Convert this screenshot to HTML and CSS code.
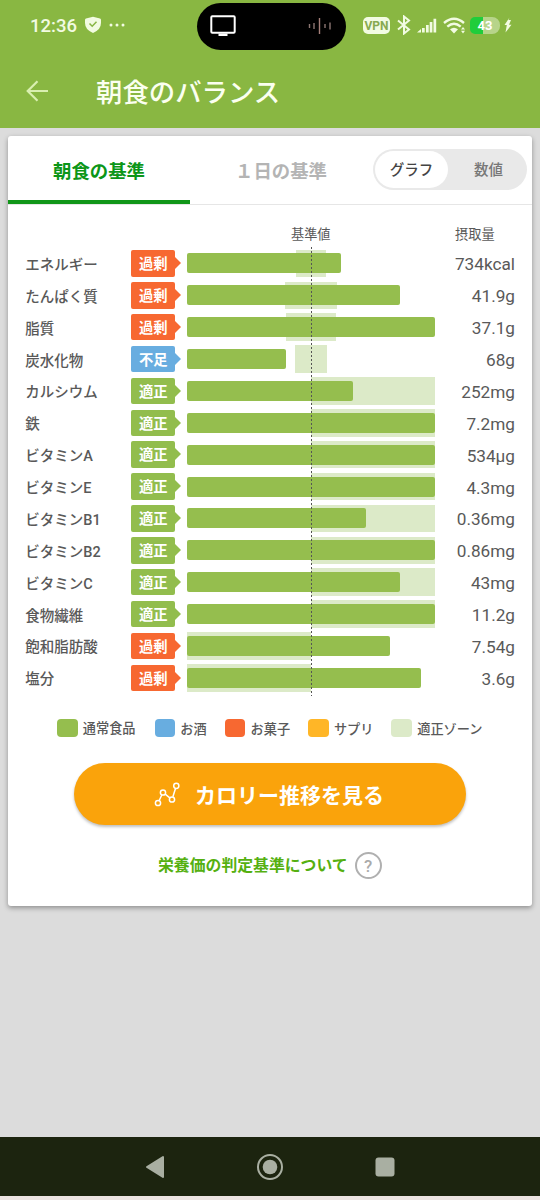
FILE: index.html
```html
<!DOCTYPE html>
<html lang="ja">
<head>
<meta charset="utf-8">
<title>朝食のバランス</title>
<link rel="stylesheet" href="styles.css">
</head>
<body>
<div class="screen">
<header class="top">
  <div class="status">
    <span class="time">12:36</span>
    <svg class="shield" width="18" height="18" viewBox="0 0 18 18"><path d="M9 .8 16 2.600Q17 3 17 4V7Q17 13.500 9 17Q1 13.500 1 7V4Q1 3 2 2.600Z" fill="#f2fbe2"/><path d="M5.500 7.500 8.200 10.200 12.500 5.800" fill="none" stroke="#87b542" stroke-width="1.500"/></svg>
    <svg class="dots" width="16" height="4" viewBox="0 0 16 4" fill="#f2fbe2"><circle cx="2" cy="2" r="1.500"/><circle cx="8" cy="2" r="1.500"/><circle cx="14" cy="2" r="1.500"/></svg>
    <div class="island">
      <svg width="26" height="22" viewBox="0 0 26 22"><rect x="1.300" y="1.300" width="23.400" height="16.400" rx="1" fill="none" stroke="#fff" stroke-width="2"/><path d="M8.500 18.500h9v2.500h-9z" fill="#fff"/></svg>
      <svg width="24" height="18" viewBox="0 0 24 18" fill="none" stroke-width="1.400"><path d="M1.500 7v4M6 6v6M17 7v4M22 5.500v7" stroke="#8c7672"/><path d="M11.500 1v16" stroke="#a57f79"/></svg>
    </div>
    <div class="signals">
      <span class="vpn">VPN</span>
      <svg class="bt" width="14" height="20" viewBox="0 0 14 20" fill="none" stroke="#f2fbe2" stroke-width="2"><path d="M1 5.500 12 14.500 7 18.500V1.500L12 5.500 1 14.500"/></svg>
      <svg class="cell" width="20" height="15" viewBox="0 0 20 15" fill="#f2fbe2"><path d="M0 14.500 4 11v3.500zM5 10h2.700v4.500H5zM9 7h2.700v7.500H9zM12.700 4h2.700v10.500h-2.700zM16.500.8h2.700v13.700h-2.700z"/></svg>
      <svg class="wifi" width="23" height="17" viewBox="0 0 23 17"><g fill="none" stroke="#f2fbe2" stroke-width="2.400"><path d="M1 6Q11 -2.500 21 6"/><path d="M4.300 9.700Q11 4 17.700 9.700"/></g><path d="M7 12.300Q11 9.300 15 12.300L11 16.500z" fill="#f2fbe2"/><path d="M18 12.600 20 10l2 2.600zM18 13.800h4L20 16.500z" fill="#f2fbe2"/></svg>
      <span class="battery">43</span>
      <svg class="bolt" width="8" height="16" viewBox="0 0 8 16"><path d="M5.500.5.5 8h2.300L1.500 15.500 7.500 7.700H5L7 3H4.500z" fill="#f2fbe2"/></svg>
    </div>
  </div>
  <div class="titlebar">
    <svg width="22" height="22" viewBox="0 0 22 22" fill="none" stroke="#d9efb0" stroke-width="2.200"><path d="M22 11H2M11.500 1.200 1.700 11l9.800 9.800"/></svg>
    <h1>朝食のバランス</h1>
  </div>
</header>

<main class="card">
  <nav class="tabs">
    <a class="tab active">朝食の基準</a>
    <a class="tab">１日の基準</a>
    <div class="toggle"><span class="on">グラフ</span><span class="off">数値</span></div>
  </nav>

  <section class="chart">
    <div class="head"><span class="std">基準値</span><span class="amount">摂取量</span></div>
    <div class="rows">
      <div class="row"><span class="name">エネルギー</span><span class="badge over">過剰</span><div class="track"><i class="zone" style="margin-left:44%;width:12%"></i><i class="bar" style="width:62%"></i></div><span class="value">734kcal</span></div>
      <div class="row"><span class="name">たんぱく質</span><span class="badge over">過剰</span><div class="track"><i class="zone" style="margin-left:39.500%;width:21%"></i><i class="bar" style="width:86%"></i></div><span class="value">41.9g</span></div>
      <div class="row"><span class="name">脂質</span><span class="badge over">過剰</span><div class="track"><i class="zone" style="margin-left:40%;width:20%"></i><i class="bar" style="width:100%"></i></div><span class="value">37.1g</span></div>
      <div class="row"><span class="name">炭水化物</span><span class="badge under">不足</span><div class="track"><i class="zone" style="margin-left:43.500%;width:13%"></i><i class="bar" style="width:40%"></i></div><span class="value">68g</span></div>
      <div class="row"><span class="name">カルシウム</span><span class="badge">適正</span><div class="track"><i class="zone" style="margin-left:50%;width:50%"></i><i class="bar" style="width:67%"></i></div><span class="value">252mg</span></div>
      <div class="row"><span class="name">鉄</span><span class="badge">適正</span><div class="track"><i class="zone" style="margin-left:50%;width:50%"></i><i class="bar" style="width:100%"></i></div><span class="value">7.2mg</span></div>
      <div class="row"><span class="name">ビタミンA</span><span class="badge">適正</span><div class="track"><i class="zone" style="margin-left:50%;width:50%"></i><i class="bar" style="width:100%"></i></div><span class="value">534μg</span></div>
      <div class="row"><span class="name">ビタミンE</span><span class="badge">適正</span><div class="track"><i class="zone" style="margin-left:50%;width:50%"></i><i class="bar" style="width:100%"></i></div><span class="value">4.3mg</span></div>
      <div class="row"><span class="name">ビタミンB1</span><span class="badge">適正</span><div class="track"><i class="zone" style="margin-left:50%;width:50%"></i><i class="bar" style="width:72%"></i></div><span class="value">0.36mg</span></div>
      <div class="row"><span class="name">ビタミンB2</span><span class="badge">適正</span><div class="track"><i class="zone" style="margin-left:50%;width:50%"></i><i class="bar" style="width:100%"></i></div><span class="value">0.86mg</span></div>
      <div class="row"><span class="name">ビタミンC</span><span class="badge">適正</span><div class="track"><i class="zone" style="margin-left:50%;width:50%"></i><i class="bar" style="width:86%"></i></div><span class="value">43mg</span></div>
      <div class="row"><span class="name">食物繊維</span><span class="badge">適正</span><div class="track"><i class="zone" style="margin-left:50%;width:50%"></i><i class="bar" style="width:100%"></i></div><span class="value">11.2g</span></div>
      <div class="row"><span class="name">飽和脂肪酸</span><span class="badge over">過剰</span><div class="track"><i class="zone" style="width:50%"></i><i class="bar" style="width:82%"></i></div><span class="value">7.54g</span></div>
      <div class="row"><span class="name">塩分</span><span class="badge over">過剰</span><div class="track"><i class="zone" style="width:50%"></i><i class="bar" style="width:94.500%"></i></div><span class="value">3.6g</span></div>
    </div>
  </section>

  <div class="legend">
    <span class="key food">通常食品</span>
    <span class="key alcohol">お酒</span>
    <span class="key sweets">お菓子</span>
    <span class="key supple">サプリ</span>
    <span class="key proper">適正ゾーン</span>
  </div>

  <a class="button">
    <svg width="27" height="25" viewBox="0 0 27 25" fill="none" stroke="#fff" stroke-width="1.500"><circle cx="4" cy="21" r="2.600"/><circle cx="9" cy="10.500" r="2.600"/><circle cx="18" cy="17.500" r="2.600"/><circle cx="22.300" cy="3.800" r="2.600"/><path d="M5.200 18.500 7.800 13M11.200 12.200 15.800 15.800M18.900 14.800 21.500 6.500"/></svg>
    カロリー推移を見る
  </a>
  <div class="about">栄養価の判定基準について<span class="help">?</span></div>
</main>

<footer class="navbar">
  <svg width="20" height="24" viewBox="0 0 20 24"><path d="M2 12 18 2v20z" fill="#a9afa2" stroke="#a9afa2" stroke-width="2" stroke-linejoin="round"/></svg>
  <svg width="28" height="28" viewBox="0 0 28 28"><circle cx="14" cy="14" r="12" fill="none" stroke="#a9afa2" stroke-width="2"/><circle cx="14" cy="14" r="7.300" fill="#a9afa2"/></svg>
  <svg width="20" height="20" viewBox="0 0 20 20"><rect x=".5" y=".5" width="19" height="19" rx="3" fill="#a9afa2"/></svg>
</footer>
</div>
</body>
</html>
```
FILE: styles.css
```css
* { box-sizing: border-box; }
body {
	margin: 0;
	background: #dcdcdc;
	font-family: Roboto, "Noto Sans CJK JP", sans-serif;
	color: #595959;
}
svg { display: block; flex: none; }
.screen {
	width: 540px;
	height: 1200px;
	display: flex;
	flex-direction: column;
	overflow: hidden;
}

/* header */
.top {
	height: 128px;
	background: #89b742;
	flex: none;
}
.status {
	display: flex;
	align-items: center;
	height: 50px;
	padding-left: 30px;
	color: #f2fbe2;
}
.time { width: 54px; padding-top: 1px; font-size: 18.5px; font-weight: 500; }
.dots { margin-left: 7px; }
.island {
	display: flex;
	align-items: center;
	justify-content: space-between;
	width: 149px;
	height: 47px;
	margin: 2px 0 0 72px;
	padding: 0 14px 0 13px;
	border-radius: 24px;
	background: #000;
}
.signals { display: flex; align-items: center; margin-left: 17px; }
.vpn {
	width: 27px;
	height: 17px;
	border-radius: 5px;
	background: #f2fbe2;
	color: #87a94f;
	font-size: 12px;
	font-weight: bold;
	line-height: 18px;
	text-align: center;
}
.bt { margin-left: 7px; }
.cell { margin-left: 6px; }
.wifi { margin-left: 6px; }
.battery {
	width: 30px;
	height: 17px;
	margin-left: 4px;
	border-radius: 5px 8px 8px 5px;
	background: linear-gradient(to right, #20cd3b 13px, #b7d48a 13px);
	color: #fff;
	font-size: 13px;
	font-weight: bold;
	line-height: 17px;
	text-align: center;
}
.bolt { margin-left: 4px; }
.titlebar {
	display: flex;
	align-items: center;
	height: 82px;
	padding-left: 26px;
}
h1 {
	margin: 0 0 0 48px;
	padding-top: 4px;
	font-size: 26.4px;
	font-weight: 500;
	line-height: 40px;
	color: #fbfff0;
}

/* card */
.card {
	height: 770px;
	margin: 8px 8px 0;
	flex: none;
	border-radius: 3px;
	background: #fff;
	box-shadow: 0 2px 5px rgba(0,0,0,.35);
}
.tabs {
	display: flex;
	height: 69px;
	border-bottom: 1px solid #e6e6e6;
}
.tab {
	width: 182px;
	height: 68px;
	font-size: 18.400px;
	font-weight: bold;
	line-height: 71px;
	text-align: center;
	color: #b4b4b4;
}
.active { color: #0c9618; border-bottom: 4px solid #109618; }
.toggle {
	display: flex;
	width: 154px;
	height: 41px;
	margin: 13px 0 0 1px;
	padding: 2px;
	border-radius: 21px;
	background: #e9e9e9;
	font-size: 14.500px;
	font-weight: 500;
	line-height: 40px;
	text-align: center;
}
.on {
	width: 73px;
	height: 37px;
	border-radius: 19px;
	background: #fff;
	color: #444;
}
.off { width: 77px; padding-left: 4px; color: #777; }

/* chart */
.head {
	display: flex;
	height: 42.500px;
	padding-left: 283px;
	font-size: 13.200px;
	line-height: 60px;
}
.amount { margin-left: 124.500px; }
.rows { position: relative; }
.rows::after {
	content: "";
	position: absolute;
	top: -1px;
	left: 303px;
	height: 449px;
	width: 1px;
	background: repeating-linear-gradient(#555 0 2.500px, transparent 2.500px 4px);
}
.row {
	display: grid;
	grid-template-columns: 106px 56px 247.700px 1fr;
	align-items: center;
	height: 31.880px;
	padding: 0 17px 0 17.300px;
}
.name { padding-top: 5px; font-size: 14.500px; font-weight: 500; line-height: 26px; }
.badge {
	--c: #92bd4d;
	position: relative;
	width: 44px;
	height: 26.500px;
	border-radius: 2px;
	background: var(--c);
	color: #fff;
	font-size: 14.300px;
	font-weight: bold;
	line-height: 29px;
	text-align: center;
}
.badge::after {
	content: "";
	position: absolute;
	left: 100%;
	top: 7px;
	border: 6px solid transparent;
	border-left-color: var(--c);
	border-right: 0;
}
.over { --c: #f76831; }
.under { --c: #68ade0; }
.track { display: grid; align-items: center; }
.zone, .bar { grid-area: 1 / 1; }
.zone { height: 27.600px; background: #dceac8; }
.bar { height: 20px; border-radius: 2px; background: #95be4e; }
.value { padding-top: 2px; font-size: 17.200px; line-height: 28px; text-align: right; }

/* legend */
.legend {
	display: flex;
	height: 18px;
	margin: 25px 0 0 49px;
	font-size: 13.200px;
	font-weight: 500;
	line-height: 22px;
	white-space: nowrap;
}
.key { display: flex; margin-right: 18px; }
.food { margin-right: 19px; line-height: 19px; }
.key::before {
	content: "";
	width: 20.500px;
	height: 18px;
	margin-right: 5.300px;
	border-radius: 4px;
	background: #95be4e;
}
.alcohol::before { background: #68ade0; }
.sweets::before { background: #f76831; }
.supple::before { background: #ffb627; }
.proper::before { background: #dceac8; }

.button {
	display: flex;
	align-items: center;
	width: 392px;
	height: 62px;
	margin: 26px 0 0 66px;
	padding-left: 80px;
	border-radius: 31px;
	background: #faa30b;
	box-shadow: 0 2px 3px rgba(0,0,0,.25);
	color: #fff;
	font-size: 21px;
	font-weight: bold;
}
.button svg { margin: 2px 14px 0 0; }
.about {
	display: flex;
	align-items: center;
	height: 27px;
	margin: 27px 0 0 150px;
	font-size: 15.850px;
	font-weight: bold;
	line-height: 29px;
	color: #55b010;
}
.help {
	width: 27px;
	height: 27px;
	margin-left: 7px;
	border: 2px solid #b0b0b0;
	border-radius: 50%;
	color: #aaa;
	font-size: 17px;
	font-weight: 500;
	line-height: 24px;
	text-align: center;
}

/* system buttons */
.navbar {
	display: flex;
	align-items: center;
	justify-content: space-between;
	height: 63px;
	margin-top: auto;
	padding: 0 145px;
	background: #1c240f;
	border-bottom: 4px solid #ece4e2;
}
```
